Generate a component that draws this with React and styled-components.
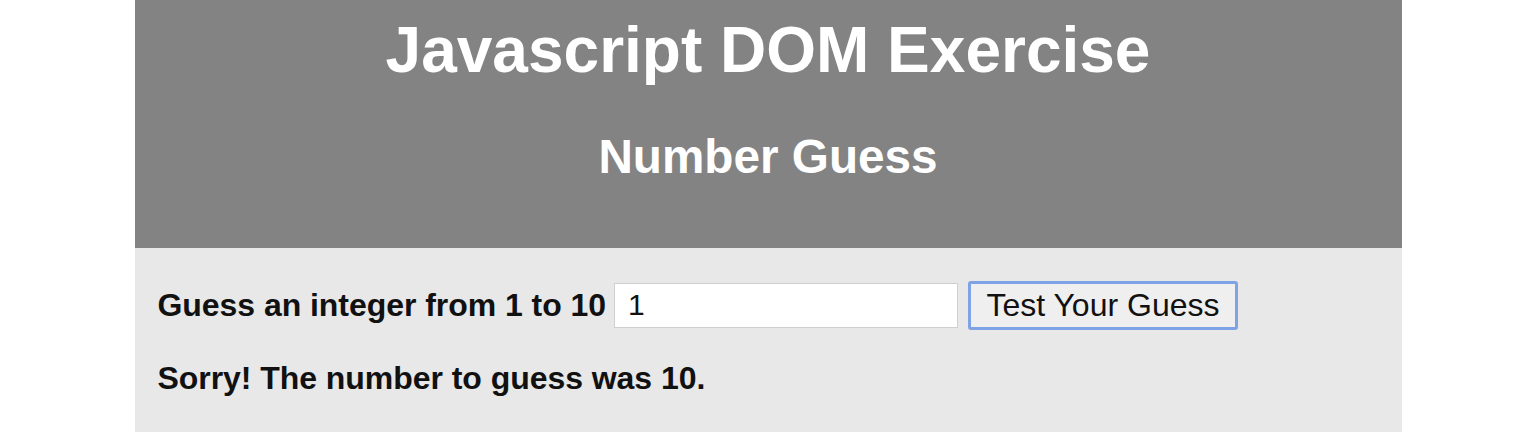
import React from "react";
import styled, { createGlobalStyle } from "styled-components";

const Global = createGlobalStyle`
  html, body { margin: 0; padding: 0; background: #ffffff; }
  body { font-family: "Liberation Sans", Arial, Helvetica, sans-serif; }
`;

const Page = styled.div`
  width: 1267px;
  margin: 0 auto;
`;

const Header = styled.header`
  background: #838383;
  color: #ffffff;
  height: 248px;
  box-sizing: border-box;
  padding-top: 18px;
  text-align: center;
`;

const Title = styled.h1`
  margin: 0;
  font-size: 64px;
  line-height: 64px;
  font-weight: bold;
`;

const Subtitle = styled.h2`
  margin: 51px 0 0;
  font-size: 47.7px;
  line-height: 48px;
  font-weight: bold;
`;

const Main = styled.main`
  background: #e8e8e8;
  min-height: 184px;
  box-sizing: border-box;
  padding: 32px 23px 0;
`;

const Row = styled.div`
  display: flex;
  align-items: center;
  height: 50px;
`;

const Label = styled.label`
  font-size: 32px;
  font-weight: bold;
  color: #111;
  letter-spacing: -0.05px;
  margin-right: 8px;
`;

const Input = styled.input`
  width: 344px;
  height: 45px;
  box-sizing: border-box;
  border: 1px solid #cfcfcf;
  background: #fff;
  font-family: "Liberation Sans", Arial, sans-serif;
  font-size: 30px;
  padding: 0 13px;
  color: #111;
  outline: none;
  margin-right: 10px;
`;

const Button = styled.button`
  width: 270px;
  height: 49px;
  box-sizing: border-box;
  border: 3px solid #7fa4e6;
  border-radius: 3px;
  background: #efefef;
  font-family: "Liberation Sans", Arial, sans-serif;
  font-size: 32px;
  color: #111;
  padding: 0;
`;

const Result = styled.p`
  margin: 30px 0 0;
  font-size: 32px;
  font-weight: bold;
  color: #111;
  letter-spacing: -0.05px;
`;

export default function App() {
  return (
    <>
      <Global />
      <Page>
        <Header>
          <Title>Javascript DOM Exercise</Title>
          <Subtitle>Number Guess</Subtitle>
        </Header>
        <Main>
          <Row>
            <Label htmlFor="guess">Guess an integer from 1 to 10</Label>
            <Input id="guess" defaultValue="1" />
            <Button>Test Your Guess</Button>
          </Row>
          <Result>Sorry! The number to guess was 10.</Result>
        </Main>
      </Page>
    </>
  );
}
